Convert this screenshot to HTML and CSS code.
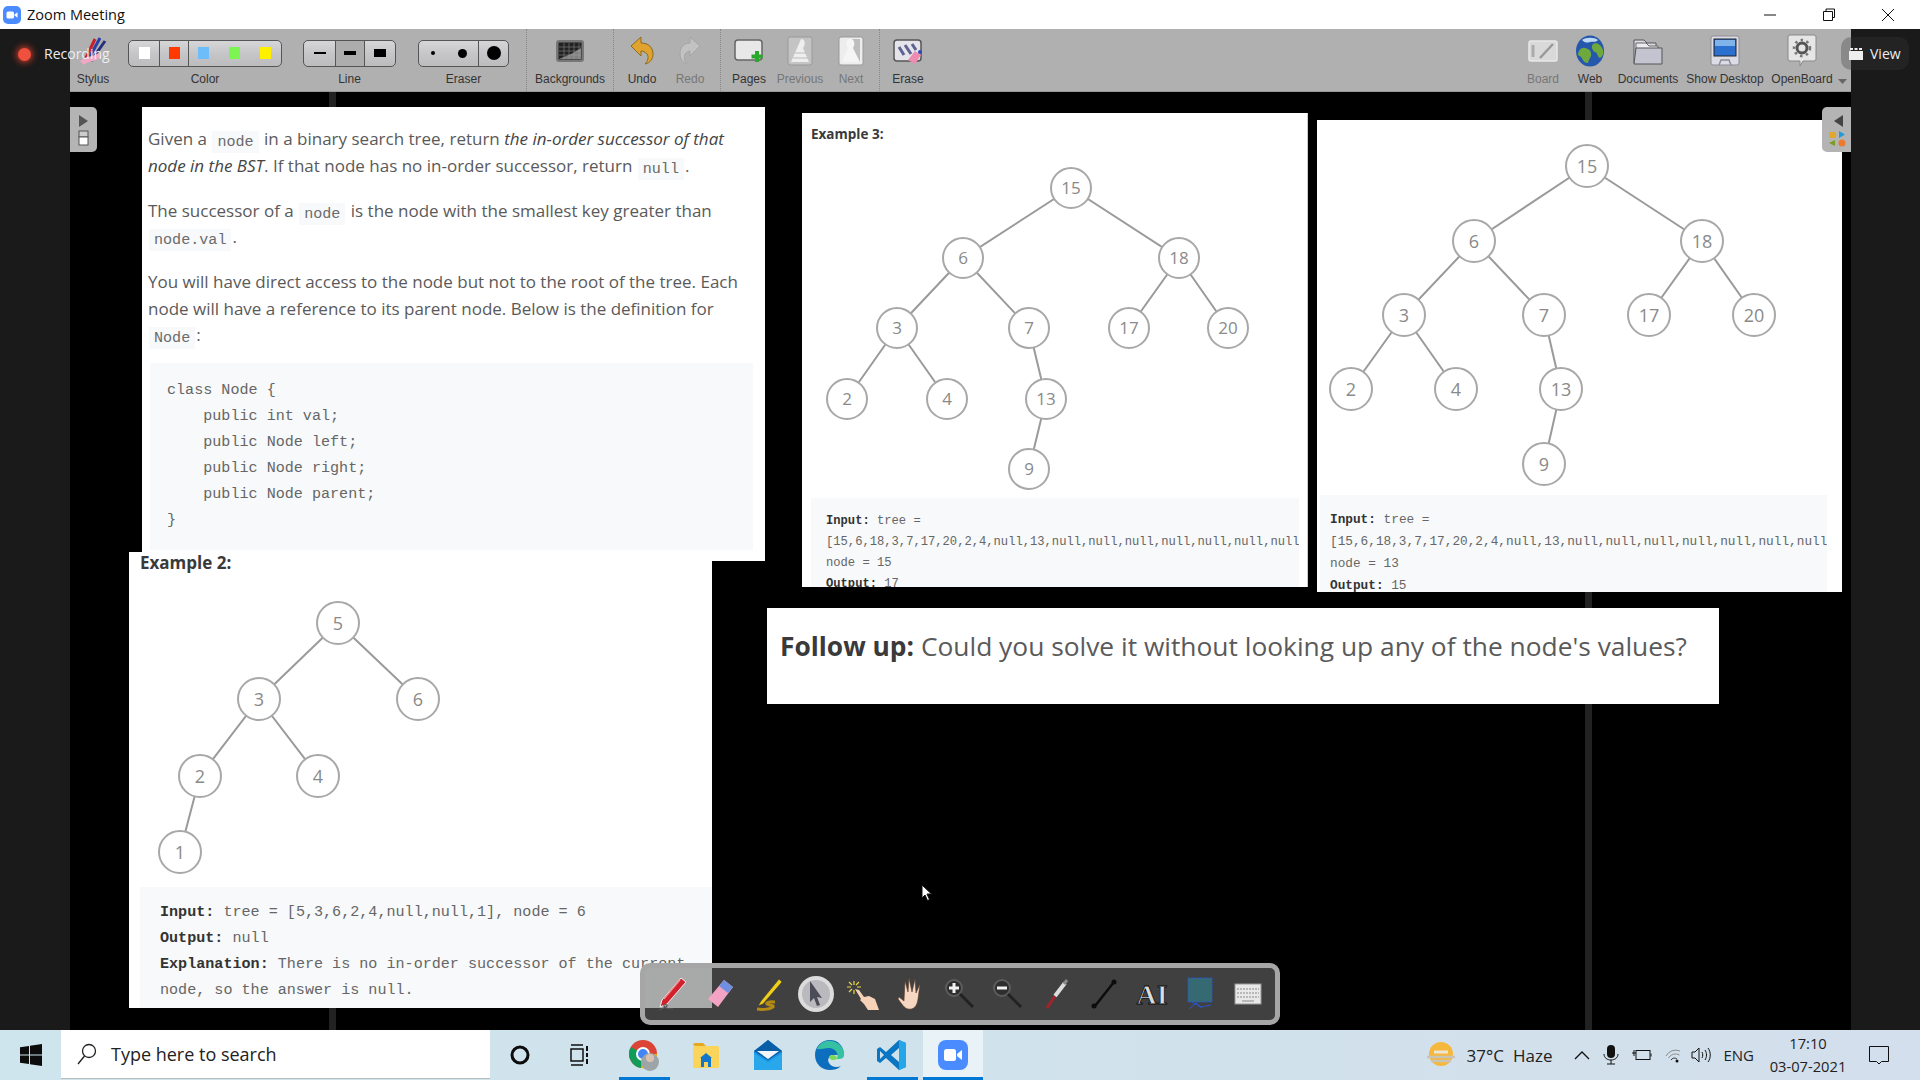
FILE: index.html
```html
<!DOCTYPE html>
<html>

<head>
    <title>Zoom Meeting</title>
    <link rel="stylesheet" href="styles.css">
</head>

<body>
    <div class="titlebar">
        <svg class="zoom-logo" width="18" height="18" viewBox="0 0 18 18">
            <rect width="18" height="18" rx="5" fill="#4a8cff" />
            <rect x="3.5" y="5.5" width="7.5" height="7" rx="1.5" fill="#fff" />
            <path d="M11.5 8.5l3-2.2v5.400l-3-2.200z" fill="#fff" />
        </svg>
        <span class="title-text">Zoom Meeting</span>
        <div class="win-controls">
            <svg width="14" height="14" viewBox="0 0 14 14"><path d="M1 7h12" stroke="#111" /></svg>
            <svg width="14" height="14" viewBox="0 0 14 14"><path d="M1.500 3.500h9v9h-9zM4 3.500v-2.500h8.500v8.500h-2" fill="none" stroke="#111" /></svg>
            <svg width="14" height="14" viewBox="0 0 14 14"><path d="M1 1l12 12M13 1l-12 12" stroke="#111" /></svg>
        </div>
    </div>

    <div class="meeting">
        <div class="side side-left">
            <div class="recording"><span class="rec-dot"></span>Recording</div>
        </div>

        <div class="center">
            <div class="toolbar">
                <div class="tool tool-stylus">
                    <div class="icon">
                        <svg width="30" height="30" viewBox="0 0 30 30">
                            <path d="M22 2L10 24" stroke="#2b3fa8" stroke-width="3" />
                            <path d="M17 3L7 24" stroke="#c8202a" stroke-width="3" />
                            <path d="M27 5L13 25" stroke="#26307e" stroke-width="3" />
                            <path d="M4 27c6-6 10-2 18-8" stroke="#f2a7c4" stroke-width="5" fill="none" />
                        </svg>
                    </div>
                    <span class="label">Stylus</span>
                </div>
                <div class="tool tool-color">
                    <div class="icon">
                        <div class="btn-group">
                            <div class="seg seg-c1"><i class="swatch sw-white"></i></div>
                            <div class="seg seg-c2"><i class="swatch sw-red"></i></div>
                            <div class="seg seg-c3">
                                <i class="swatch sw-blue"></i>
                                <i class="swatch sw-green"></i>
                                <i class="swatch sw-yellow"></i>
                            </div>
                        </div>
                    </div>
                    <span class="label">Color</span>
                </div>
                <div class="tool tool-line">
                    <div class="icon">
                        <div class="btn-group">
                            <div class="seg seg-l1"><i class="dash dash-1"></i></div>
                            <div class="seg seg-l2 seg-on"><i class="dash dash-2"></i></div>
                            <div class="seg seg-l3"><i class="dash dash-3"></i></div>
                        </div>
                    </div>
                    <span class="label">Line</span>
                </div>
                <div class="tool tool-eraser">
                    <div class="icon">
                        <div class="btn-group">
                            <div class="seg seg-e1"><i class="dot dot-1"></i></div>
                            <div class="seg seg-e2"><i class="dot dot-2"></i></div>
                            <div class="seg seg-e3"><i class="dot dot-3"></i></div>
                        </div>
                    </div>
                    <span class="label">Eraser</span>
                </div>
                <div class="sep sep-first"></div>
                <div class="tool tool-backgrounds">
                    <div class="icon">
                        <svg width="30" height="24" viewBox="0 0 30 24">
                            <rect x="1" y="1" width="28" height="22" rx="3" fill="#777" />
                            <rect x="3.500" y="3.500" width="23" height="17" fill="#222" />
                            <path d="M4 8h22M4 12h22M4 16h22M9 4v16M14 4v16M19 4v16M24 4v16" stroke="#777" stroke-width=".7" />
                            <path d="M4 20l12-5 10-6v11z" fill="#aaa" opacity=".7" />
                        </svg>
                    </div>
                    <span class="label">Backgrounds</span>
                </div>
                <div class="sep"></div>
                <div class="tool tool-undo">
                    <div class="icon">
                        <svg width="26" height="30" viewBox="0 0 26 30">
                            <path d="M2 10L12 1v6c8 0 12 5 12 11 0 5-3 9-8 10 3-3 4-7 2-10-2-2-4-3-6-3v5z" fill="#e0a32e" stroke="#8a6a22" />
                        </svg>
                    </div>
                    <span class="label">Undo</span>
                </div>
                <div class="tool tool-redo">
                    <div class="icon">
                        <svg width="24" height="30" viewBox="0 0 24 30">
                            <path d="M22 10L12 1v6C5 7 2 12 2 18c0 5 3 9 7 10-3-3-3-7-2-10 2-2 3-3 5-3v5z" fill="#c2c2c2" stroke="#a5a5a5" />
                        </svg>
                    </div>
                    <span class="label label-off">Redo</span>
                </div>
                <div class="sep sep-gap"></div>
                <div class="tool tool-pages">
                    <div class="icon">
                        <svg width="30" height="26" viewBox="0 0 30 26">
                            <rect x="1" y="2" width="27" height="20" rx="3" fill="#e8e8e8" stroke="#666" stroke-width="1.500" />
                            <path d="M23 13v11M17.500 18.500h11" stroke="#29a82c" stroke-width="4" />
                        </svg>
                    </div>
                    <span class="label">Pages</span>
                </div>
                <div class="tool tool-prev">
                    <div class="icon">
                        <svg width="26" height="30" viewBox="0 0 26 30">
                            <rect x="1" y="1" width="24" height="28" rx="2" fill="#c4c4c4" stroke="#999" />
                            <path d="M14 3c4 0 5 5 2 9l6 14H4z" fill="#eee" />
                            <path d="M8 17h12M6 22h15" stroke="#bbb" />
                        </svg>
                    </div>
                    <span class="label label-off">Previous</span>
                </div>
                <div class="tool tool-next">
                    <div class="icon">
                        <svg width="26" height="30" viewBox="0 0 26 30">
                            <rect x="1" y="1" width="24" height="28" rx="2" fill="#ededed" stroke="#999" />
                            <path d="M12 3c-4 0-5 5-2 9l-6 14h18V3z" fill="#f5f5f5" />
                            <path d="M14 3c4 3 2 7 1 9l7 14V3z" fill="#bdbdbd" />
                        </svg>
                    </div>
                    <span class="label label-off">Next</span>
                </div>
                <div class="sep"></div>
                <div class="tool tool-erase">
                    <div class="icon">
                        <svg width="30" height="28" viewBox="0 0 30 28">
                            <rect x="1" y="3" width="27" height="21" rx="3" fill="#e4e4ea" stroke="#555" stroke-width="1.500" />
                            <path d="M6 10l5 8M12 8l6 9M19 7l4 6" stroke="#5c6390" stroke-width="3" />
                            <path d="M15 23l7-9 6 4-6 9z" fill="#ee8bb0" />
                            <circle cx="27" cy="15" r="2" fill="#2d49b8" />
                        </svg>
                    </div>
                    <span class="label">Erase</span>
                </div>

                <div class="tool tool-board">
                    <div class="icon">
                        <svg width="30" height="26" viewBox="0 0 30 26">
                            <rect x="1" y="3" width="28" height="20" rx="2" fill="#d9d9d9" stroke="#e8e8e8" stroke-width="1.500" />
                            <path d="M5 7v12" stroke="#aaa" stroke-width="3" />
                            <path d="M12 20L25 6" stroke="#999" stroke-width="2.500" />
                        </svg>
                    </div>
                    <span class="label label-off">Board</span>
                </div>
                <div class="tool tool-web">
                    <div class="icon">
                        <svg width="30" height="32" viewBox="0 0 30 32">
                            <ellipse cx="15" cy="16" rx="14" ry="15.500" fill="#2557ad" />
                            <path d="M3 19c1-5 4-7 7-6s5 1 6 5-2 5-3 10c-5 0-5-4-7-6s-3-1-3-3zM18 9c4-2 8 1 10 6 1 4-1 7-3 8-3-1-2-5-5-6s-4-6-2-8z" fill="#6fa83c" />
                            <path d="M7 5c4-3 12-3 16 0-3 3-5 1-8 2s-5 1-8-2z" fill="#bcd8f2" />
                        </svg>
                    </div>
                    <span class="label">Web</span>
                </div>
                <div class="tool tool-docs">
                    <div class="icon">
                        <svg width="30" height="28" viewBox="0 0 30 28">
                            <path d="M1 26V3h10l3 3h9v5H4" fill="#dcdce2" stroke="#555" />
                            <path d="M3 26V6h10l3 3h9v5H6" fill="#ececf0" stroke="#666" />
                            <path d="M1 27l2-16h26v16z" fill="#c4c4d0" stroke="#555" />
                        </svg>
                    </div>
                    <span class="label">Documents</span>
                </div>
                <div class="tool tool-desktop">
                    <div class="icon">
                        <svg width="30" height="32" viewBox="0 0 30 32">
                            <rect x="1" y="1" width="28" height="29" rx="2" fill="#dcdce6" stroke="#8c8c96" />
                            <rect x="4" y="4" width="22" height="17" fill="#2b6fcf" stroke="#222" />
                            <path d="M5 5h20v6H5z" fill="#7fb3ea" />
                            <path d="M9 30l2-5h8l2 5" fill="none" stroke="#8c8c96" stroke-width="1.500" />
                        </svg>
                    </div>
                    <span class="label">Show Desktop</span>
                </div>
                <div class="tool tool-openboard">
                    <div class="icon">
                        <svg width="30" height="34" viewBox="0 0 30 34">
                            <path d="M3 1h24a2 2 0 012 2v22a2 2 0 01-2 2H16l-3 5v-5H3a2 2 0 01-2-2V3a2 2 0 012-2z" fill="#e6e6e6" stroke="#888" />
                            <circle cx="15" cy="14" r="5" fill="none" stroke="#555" stroke-width="3" />
                            <circle cx="15" cy="14" r="8" fill="none" stroke="#777" stroke-width="2.500" stroke-dasharray="2.500 3.500" />
                        </svg>
                    </div>
                    <span class="label">OpenBoard</span>
                </div>
                <div class="tool-arrow"></div>
            </div>

            <div class="canvas">
                <div class="strip strip-a"></div>
                <div class="strip strip-b"></div>

                <div class="card card-problem">
                    <p>Given a <code>node</code> in a binary search tree, return <em>the in-order successor of that<br>node in the BST</em>. If that node has no in-order successor, return <code>null</code>.</p>
                    <p>The successor of a <code>node</code> is the node with the smallest key greater than<br><code>node.val</code>.</p>
                    <p>You will have direct access to the node but not to the root of the tree. Each<br>node will have a reference to its parent node. Below is the definition for<br><code>Node</code>:</p>
                    <pre class="code-problem">class Node {
    public int val;
    public Node left;
    public Node right;
    public Node parent;
}</pre>
                </div>

                <div class="card card-ex2">
                    <div class="ex-title">Example 2:</div>
                    <svg class="tree" width="583" height="313" viewBox="129 574 583 313">
                        <path d="M338 623L259 699M338 623L418 699M259 699L200 776M259 699L318 776M200 776L180 852" />
                        <circle cx="338" cy="623" r="21" /><text x="338" y="630">5</text>
                        <circle cx="259" cy="699" r="21" /><text x="259" y="706">3</text>
                        <circle cx="418" cy="699" r="21" /><text x="418" y="706">6</text>
                        <circle cx="200" cy="776" r="21" /><text x="200" y="783">2</text>
                        <circle cx="318" cy="776" r="21" /><text x="318" y="783">4</text>
                        <circle cx="180" cy="852" r="21" /><text x="180" y="859">1</text>
                    </svg>
                    <pre class="code-ex2"><b>Input:</b> tree = [5,3,6,2,4,null,null,1], node = 6
<b>Output:</b> null
<b>Explanation:</b> There is no in-order successor of the current
node, so the answer is null.</pre>
                </div>

                <div class="card card-ex3">
                    <div class="ex-title-small">Example 3:</div>
                    <svg class="tree tree-small" width="506" height="354" viewBox="802 144 506 354">
                        <path d="M1071 188L963 258M1071 188L1179 258M963 258L897 328M963 258L1029 328M1179 258L1129 328M1179 258L1228 328M897 328L847 399M897 328L947 399M1029 328L1046 399M1046 399L1029 469" />
                        <circle cx="1071" cy="188" r="20" /><text x="1071" y="194">15</text>
                        <circle cx="963" cy="258" r="20" /><text x="963" y="264">6</text>
                        <circle cx="1179" cy="258" r="20" /><text x="1179" y="264">18</text>
                        <circle cx="897" cy="328" r="20" /><text x="897" y="334">3</text>
                        <circle cx="1029" cy="328" r="20" /><text x="1029" y="334">7</text>
                        <circle cx="1129" cy="328" r="20" /><text x="1129" y="334">17</text>
                        <circle cx="1228" cy="328" r="20" /><text x="1228" y="334">20</text>
                        <circle cx="847" cy="399" r="20" /><text x="847" y="405">2</text>
                        <circle cx="947" cy="399" r="20" /><text x="947" y="405">4</text>
                        <circle cx="1046" cy="399" r="20" /><text x="1046" y="405">13</text>
                        <circle cx="1029" cy="469" r="20" /><text x="1029" y="475">9</text>
                    </svg>
                    <pre class="code-ex3"><b>Input:</b> tree =
[15,6,18,3,7,17,20,2,4,null,13,null,null,null,null,null,null,null,9]
node = 15
<b>Output:</b> 17</pre>
                </div>

                <div class="card card-ex4">
                    <svg class="tree" width="525" height="375" viewBox="1317 120 525 375">
                        <path d="M1587 166L1474 241M1587 166L1702 241M1474 241L1404 315M1474 241L1544 315M1702 241L1649 315M1702 241L1754 315M1404 315L1351 389M1404 315L1456 389M1544 315L1561 389M1561 389L1544 464" />
                        <circle cx="1587" cy="166" r="21" /><text x="1587" y="173">15</text>
                        <circle cx="1474" cy="241" r="21" /><text x="1474" y="248">6</text>
                        <circle cx="1702" cy="241" r="21" /><text x="1702" y="248">18</text>
                        <circle cx="1404" cy="315" r="21" /><text x="1404" y="322">3</text>
                        <circle cx="1544" cy="315" r="21" /><text x="1544" y="322">7</text>
                        <circle cx="1649" cy="315" r="21" /><text x="1649" y="322">17</text>
                        <circle cx="1754" cy="315" r="21" /><text x="1754" y="322">20</text>
                        <circle cx="1351" cy="389" r="21" /><text x="1351" y="396">2</text>
                        <circle cx="1456" cy="389" r="21" /><text x="1456" y="396">4</text>
                        <circle cx="1561" cy="389" r="21" /><text x="1561" y="396">13</text>
                        <circle cx="1544" cy="464" r="21" /><text x="1544" y="471">9</text>
                    </svg>
                    <pre class="code-ex4"><b>Input:</b> tree =
[15,6,18,3,7,17,20,2,4,null,13,null,null,null,null,null,null,null,9]
node = 13
<b>Output:</b> 15</pre>
                </div>

                <div class="card card-follow"><b>Follow up:</b> Could you solve it without looking up any of the node's values?</div>

                <div class="handle handle-left">
                    <svg width="20" height="34" viewBox="0 0 20 34">
                        <path d="M5 2l9 6-9 6z" fill="#555" />
                        <rect x="5" y="18" width="9" height="6" fill="#ccc" stroke="#555" />
                        <rect x="5" y="24" width="9" height="8" fill="#fff" stroke="#555" />
                    </svg>
                </div>
                <div class="handle handle-right">
                    <svg width="24" height="34" viewBox="0 0 24 34">
                        <path d="M18 2l-9 6 9 6z" fill="#444" />
                        <rect x="4" y="19" width="7" height="6" fill="#e0a82e" />
                        <path d="M14 18l6 3.500-6 3.500z" fill="#1e9bd8" />
                        <path d="M10 27l-6 3 6 3z" fill="#7d9b2a" />
                        <circle cx="17" cy="30" r="3.500" fill="#ee7a2d" />
                    </svg>
                </div>

                <div class="float-bar">
                    <div class="float-item">
                        <svg width="32" height="36" viewBox="0 0 32 36">
                            <path d="M25 2L6 24l-2 7 7-3L30 6z" fill="#d3202c" stroke="#eee" />
                            <path d="M24 4L8 23" stroke="#f28a8a" stroke-width="1.200" />
                            <path d="M3 34c4-2 7-2 8-4s-4-2-3 0 5 3 9 3" fill="none" stroke="#555" stroke-width="1.200" />
                        </svg>
                    </div>
                    <div class="float-item">
                        <svg width="32" height="34" viewBox="0 0 32 34">
                            <path d="M4 22L20 3l9 7-15 20z" fill="#f3a3c4" />
                            <path d="M20 3l9 7-5 6-9-7z" fill="#6f8fe0" />
                        </svg>
                    </div>
                    <div class="float-item">
                        <svg width="32" height="36" viewBox="0 0 32 36">
                            <path d="M27 3L9 25l-3 5 5-2L30 6z" fill="#f0ce1c" stroke="#333" stroke-width=".6" />
                            <path d="M5 33c6 1 14 0 16-2s-8-2-6-4 6-1 8-1" fill="none" stroke="#b58a14" stroke-width="3" />
                        </svg>
                    </div>
                    <div class="float-item">
                        <svg width="38" height="38" viewBox="0 0 38 38">
                            <circle cx="19" cy="19" r="18" fill="#dcdcdc" />
                            <circle cx="19" cy="19" r="14" fill="#b9b9be" />
                            <path d="M13 6l12 17-5-1 3 8-3 1-3-8-4 4z" fill="#4c4c58" />
                        </svg>
                    </div>
                    <div class="float-item">
                        <svg width="38" height="38" viewBox="0 0 38 38">
                            <path d="M9 6v4M9 15v4M2 12h4M12 12h4M4 7l3 3M14 7l-3 3M4 17l3-3" stroke="#e8d84a" stroke-width="1.200" />
                            <path d="M10 14l4 1 5 7 5-1 6 3 4 11H23l-4-6-4-4 1-1z" fill="#f6d3b8" />
                        </svg>
                    </div>
                    <div class="float-item">
                        <svg width="30" height="36" viewBox="0 0 30 36">
                            <path d="M8 5l3 11 1-14 3 14 3-13 1 14 4-9-2 15c-1 7-4 11-10 10-4-1-6-5-10-10l1-2 5 4z" fill="#f6d8c2" stroke="#5a3a2a" stroke-width=".6" />
                        </svg>
                    </div>
                    <div class="float-item">
                        <svg width="32" height="34" viewBox="0 0 32 34">
                            <circle cx="10" cy="11" r="8" fill="#2e2e2e" stroke="#5c5c5c" stroke-width="2" />
                            <path d="M10 6v10M5 11h10" stroke="#f2f2f2" stroke-width="3" />
                            <path d="M16 17l13 13" stroke="#222" stroke-width="3" />
                        </svg>
                    </div>
                    <div class="float-item">
                        <svg width="32" height="34" viewBox="0 0 32 34">
                            <circle cx="10" cy="11" r="8" fill="#2e2e2e" stroke="#5c5c5c" stroke-width="2" />
                            <path d="M5 11h10" stroke="#f2f2f2" stroke-width="3" />
                            <path d="M16 17l13 13" stroke="#222" stroke-width="3" />
                        </svg>
                    </div>
                    <div class="float-item">
                        <svg width="32" height="36" viewBox="0 0 32 36">
                            <path d="M7 32l8-12" stroke="#a3232a" stroke-width="3" />
                            <path d="M15 20l10-13" stroke="#ddd" stroke-width="4" />
                            <path d="M24 8l3-4" stroke="#888" stroke-width="3" />
                        </svg>
                    </div>
                    <div class="float-item">
                        <svg width="32" height="36" viewBox="0 0 32 36">
                            <path d="M7 30L26 6" stroke="#0c0c0c" stroke-width="2.500" />
                            <circle cx="6" cy="30" r="2.500" fill="#0c0c0c" />
                            <circle cx="26" cy="6" r="2.500" fill="#0c0c0c" />
                        </svg>
                    </div>
                    <div class="float-item">
                        <svg width="32" height="36" viewBox="0 0 32 36">
                            <text class="ai-glyph" x="16" y="28">AI</text>
                        </svg>
                    </div>
                    <div class="float-item">
                        <svg width="28" height="36" viewBox="0 0 28 36">
                            <rect x="2" y="2" width="24" height="24" fill="#356a72" stroke="#2b55c9" stroke-dasharray="2 1" />
                            <path d="M3 33l7-6 5 4 10-2M6 26l10 6" fill="none" stroke="#2b55c9" />
                        </svg>
                    </div>
                    <div class="float-item">
                        <svg width="28" height="22" viewBox="0 0 28 22">
                            <rect x="1" y="1" width="26" height="20" fill="#e8e8e8" stroke="#999" />
                            <path d="M3 6h22M3 10h22M3 14h22" stroke="#888" stroke-dasharray="2 1" />
                            <path d="M8 18h12" stroke="#888" />
                        </svg>
                    </div>
                </div>

                <svg class="cursor" width="12" height="18" viewBox="0 0 12 18">
                    <path d="M1 1v13l3-3 2.500 5.500 2-1L6 10h4.500z" fill="#fff" stroke="#111" />
                </svg>
            </div>
        </div>

        <div class="side side-right">
            <div class="view-btn">
                <svg width="14" height="12" viewBox="0 0 14 12">
                    <rect y="3" width="14" height="9" fill="#eee" />
                    <path d="M1 0h3v2H1zM5.500 0h3v2h-3zM10 0h3v2h-3z" fill="#eee" />
                </svg>
                View
            </div>
        </div>
    </div>

    <div class="taskbar">
        <div class="start">
            <svg width="22" height="22" viewBox="0 0 22 22">
                <path d="M0 3.200l9-1.300v8.600H0zM10 1.800L22 0v10.500H10zM0 11.500h9v8.600l-9-1.300zM10 11.500h12V22l-12-1.800z" fill="#0c0c0c" />
            </svg>
        </div>
        <div class="search">
            <svg width="22" height="24" viewBox="0 0 22 24">
                <circle cx="13" cy="9" r="6.500" fill="none" stroke="#222" stroke-width="1.300" />
                <path d="M8.500 14L2 22" stroke="#222" stroke-width="1.300" />
            </svg>
            <span>Type here to search</span>
        </div>
        <div class="task-icon task-cortana">
            <svg width="22" height="22" viewBox="0 0 22 22"><circle cx="11" cy="11" r="8" fill="none" stroke="#0c0c0c" stroke-width="3" /></svg>
        </div>
        <div class="task-icon task-view">
            <svg width="20" height="22" viewBox="0 0 20 22">
                <path d="M2 1h12M2 21h12" stroke="#111" stroke-width="1.500" />
                <rect x="2" y="5" width="12" height="12" fill="none" stroke="#111" stroke-width="1.500" />
                <path d="M18 2v5M18 9v4M18 15v5" stroke="#111" stroke-width="2" />
            </svg>
        </div>
        <div class="task-icon task-active">
            <svg width="32" height="32" viewBox="0 0 32 32">
                <circle cx="15" cy="15" r="14" fill="#db4437" />
                <path d="M15 15L3 22A14 14 0 0013 29z" fill="#0f9d58" />
                <path d="M15 15L3 22A14 14 0 013 8z" fill="#0f9d58" />
                <path d="M15 15h14a14 14 0 01-16 14z" fill="#f4b400" />
                <circle cx="15" cy="15" r="6" fill="#4285f4" stroke="#fff" stroke-width="2" />
                <circle cx="22" cy="23" r="9" fill="#9ea5a8" />
                <circle cx="22" cy="19" r="4" fill="#d9c3b0" />
            </svg>
        </div>
        <div class="task-icon">
            <svg width="28" height="30" viewBox="0 0 28 30">
                <path d="M1 5a2 2 0 012-2h8l3 3H3z" fill="#e5a81f" />
                <rect x="1" y="6" width="26" height="22" rx="1.500" fill="#fbd45b" />
                <path d="M9 27v-9h10v9h-3v-5h-4v5z" fill="#1277c9" />
                <path d="M8 18l6-5 6 5z" fill="#1277c9" />
            </svg>
        </div>
        <div class="task-icon">
            <svg width="30" height="32" viewBox="0 0 30 32">
                <path d="M15 1l14 11v19H1V12z" fill="#1490df" />
                <path d="M15 1l14 11-14 9-14-9z" fill="#0a5ea8" />
                <path d="M4 12h22l-11 8z" fill="#f2f6fa" />
                <path d="M1 14l14 9 14-9v17H1z" fill="#28a8ea" />
            </svg>
        </div>
        <div class="task-icon">
            <svg width="32" height="32" viewBox="0 0 32 32">
                <path d="M16 1C7 1 1 8 1 16c0 9 7 15 15 15 4 0 8-1 11-4-4 2-10 1-12-3-2-3 0-7 3-8h12C30 7 24 1 16 1z" fill="#0d6ebd" />
                <path d="M3 10C6 3 14 0 21 3c6 2 10 8 9 14-1 3-4 3-7 3 2-6-2-11-8-11-5 0-9 2-12 1z" fill="#35c1a2" />
                <path d="M18 16c3 0 5 1 5 4-3 2-6 1-8-1 0-2 1-3 3-3z" fill="#7cd957" />
            </svg>
        </div>
        <div class="task-icon task-active">
            <svg width="30" height="32" viewBox="0 0 30 32">
                <path d="M22 1l7 3v24l-7 3L9 19l-6 5-3-2v-12l3-2 6 5z" fill="#0a75c2" />
                <path d="M22 1l7 3v24l-7 3z" fill="#25a6e8" />
                <path d="M22 9l-8 7 8 7z" fill="#cfe2ec" />
                <path d="M3 12l4 4-4 4z" fill="#cfe2ec" />
            </svg>
        </div>
        <div class="task-icon task-zoom">
            <svg width="30" height="30" viewBox="0 0 30 30">
                <rect width="30" height="30" rx="8" fill="#4a8cff" />
                <rect x="6" y="9" width="12" height="12" rx="2.500" fill="#fff" />
                <path d="M19 14l5-4v10l-5-4z" fill="#fff" />
            </svg>
        </div>

        <div class="tray">
            <div class="weather">
                <svg width="30" height="26" viewBox="0 0 30 26">
                    <circle cx="15" cy="12" r="12" fill="#f5b83d" />
                    <path d="M1 15h28M5 19h20" stroke="#c9c4b5" stroke-width="2.500" />
                    <path d="M8 10h14" stroke="#ece6d2" stroke-width="3" />
                </svg>
                <span class="temp">37°C</span>
                <span class="haze">Haze</span>
            </div>
            <svg class="tray-chevron" width="16" height="10" viewBox="0 0 16 10"><path d="M1 9l7-7 7 7" fill="none" stroke="#111" stroke-width="1.300" /></svg>
            <svg class="tray-mic" width="16" height="20" viewBox="0 0 16 20">
                <rect x="4" y="0" width="8" height="13" rx="4" fill="#111" />
                <path d="M1 9c0 8 14 8 14 0M8 15v4M4 19h8" fill="none" stroke="#111" />
            </svg>
            <svg class="tray-battery" width="20" height="12" viewBox="0 0 20 12">
                <rect x="4" y="1.500" width="14" height="9" fill="none" stroke="#111" />
                <path d="M19 4.500v3M0 4h4M2 1v6" stroke="#111" />
            </svg>
            <svg class="tray-wifi" width="16" height="16" viewBox="0 0 16 16">
                <path d="M1 9a11 11 0 0114-5M3.500 11a8 8 0 0111-3" fill="none" stroke="#8c8c8c" />
                <path d="M6 13a4 4 0 016-1" fill="none" stroke="#333" />
                <circle cx="12" cy="14" r="1.500" fill="#111" />
            </svg>
            <svg class="tray-sound" width="21" height="18" viewBox="0 0 21 18">
                <path d="M1 6h3l4-4v14l-4-4H1z" fill="none" stroke="#111" />
                <path d="M11 6c1 2 1 4 0 6M14 4c2 3 2 7 0 10M17 2c3 4 3 10 0 14" fill="none" stroke="#111" />
            </svg>
            <span class="lang">ENG</span>
            <div class="clock">
                <span>17:10</span>
                <span>03-07-2021</span>
            </div>
            <svg class="tray-notify" width="20" height="19" viewBox="0 0 20 19">
                <path d="M.5.500h19v15h-7l-2.500 2.500-2.500-2.500h-7z" fill="none" stroke="#111" />
            </svg>
        </div>
    </div>
</body>

</html>
```

FILE: styles.css
```css
* {
    margin: 0;
    padding: 0;
    box-sizing: border-box;
}

body {
    font-family: "Open Sans", "Liberation Sans", sans-serif;
    width: 1920px;
    height: 1080px;
    overflow: hidden;
    display: flex;
    flex-direction: column;
    background: #000;
}

svg {
    display: block;
    flex: none;
}

/* title bar */
.titlebar {
    height: 29px;
    background: #fff;
    display: flex;
    align-items: center;
    padding-left: 3px;
}

.title-text {
    margin-left: 6px;
    font-size: 14.500px;
    color: #111;
}

.win-controls {
    margin-left: auto;
    display: flex;
    gap: 45px;
    padding-right: 25px;
}

/* meeting area */
.meeting {
    flex: 1;
    display: flex;
    min-height: 0;
}

.side {
    background: #1a1a1a;
    position: relative;
}

.side-left {
    width: 70px;
}

.side-right {
    width: 69px;
}

.recording {
    position: absolute;
    left: 18px;
    top: 15px;
    z-index: 5;
    display: flex;
    align-items: center;
    gap: 13px;
    font-size: 14px;
    line-height: 20px;
    color: #eee;
    white-space: nowrap;
}

.rec-dot {
    width: 13px;
    height: 13px;
    border-radius: 50%;
    background: #f0503e;
    box-shadow: 0 0 7px 1px #e8402c;
}

.view-btn {
    position: absolute;
    left: -10px;
    top: 8px;
    width: 68px;
    height: 33px;
    border-radius: 10px;
    background: rgba(57, 57, 57, 0.32);
    display: flex;
    align-items: center;
    gap: 7px;
    padding-left: 8px;
    font-size: 14px;
    color: #eee;
}

.center {
    flex: 1;
    display: flex;
    flex-direction: column;
    min-width: 0;
}

/* whiteboard toolbar */
.toolbar {
    height: 63px;
    background: #b0b0b0;
    border-bottom: 1px solid #999;
    display: flex;
}

.tool {
    display: flex;
    flex-direction: column;
    align-items: center;
    padding-top: 5px;
}

.icon {
    height: 34px;
    display: flex;
    align-items: center;
    justify-content: center;
}

.label {
    font-family: "Liberation Sans", sans-serif;
    font-size: 12px;
    line-height: 22px;
    color: #333;
    white-space: nowrap;
}

.label-off {
    color: #777;
}

.sep {
    width: 1px;
    border-left: 1px dotted #888;
}

.sep-first {
    margin-left: 17px;
}

.sep-gap {
    margin-left: 10px;
}

.tool-stylus { width: 46px; }
.tool-color { width: 154px; margin-left: 12px; }
.tool-line { width: 93px; margin-left: 21px; }
.tool-eraser { width: 91px; margin-left: 22px; }
.tool-backgrounds { width: 86px; }
.tool-undo { width: 56px; }
.tool-redo { width: 40px; }
.tool-pages { width: 56px; }
.tool-prev { width: 46px; }
.tool-next { width: 56px; }
.tool-erase { width: 56px; }
.tool-board { width: 46px; margin-left: auto; }
.tool-web { width: 48px; }
.tool-docs { width: 68px; }
.tool-desktop { width: 86px; }
.tool-openboard { width: 68px; }

.tool-arrow {
    width: 15px;
    align-self: flex-end;
    margin-bottom: 7px;
    height: 5px;
    background: #666;
    clip-path: polygon(2px 0, 11px 0, 6.500px 100%);
}

.btn-group {
    display: flex;
    height: 27px;
    margin-top: 4px;
    border: 1px solid #555;
    border-radius: 5px;
    overflow: hidden;
    background: linear-gradient(#d6d6d8, #c6c6c8 50%, #bcbcbe);
}

.tool-color .btn-group,
.tool-line .btn-group,
.tool-eraser .btn-group {
    width: 100%;
}

.tool-color .icon,
.tool-line .icon,
.tool-eraser .icon {
    align-self: stretch;
}

.seg {
    display: flex;
    align-items: center;
    justify-content: center;
    border-right: 1px solid #555;
}

.seg:last-child {
    border-right: none;
}

.seg-on {
    background: #adadad;
}

.seg-c1 { width: 31px; }
.seg-c2 { width: 29px; }
.seg-c3 { flex: 1; justify-content: space-between; padding: 0 10px 0 9px; }
.seg-l1 { width: 32px; }
.seg-l2 { width: 29px; }
.seg-l3 { flex: 1; }
.seg-e1 { width: 28px; border-right: none; }
.seg-e2 { width: 32px; }
.seg-e3 { flex: 1; }

.swatch {
    width: 11px;
    height: 12px;
}

.sw-white { background: #fff; }
.sw-red { background: #ff3a00; }
.sw-blue { background: #6dbdfb; }
.sw-green { background: #7cf552; }
.sw-yellow { background: #fff000; }

.dash {
    background: #000;
    width: 12px;
}

.dash-1 { height: 2px; }
.dash-2 { height: 4px; }
.dash-3 { height: 8px; }

.dot {
    background: #000;
    border-radius: 50%;
}

.dot-1 { width: 4px; height: 4px; }
.dot-2 { width: 9px; height: 9px; }
.dot-3 { width: 14px; height: 14px; }

/* shared screenshots on the board */
.canvas {
    flex: 1;
    position: relative;
    background: #000;
}

.strip {
    position: absolute;
    top: 0;
    bottom: 0;
    width: 7px;
    background: #222;
}

.strip-a { left: 259px; }
.strip-b { left: 1515px; }

.card {
    position: absolute;
    background: #fff;
    overflow: hidden;
    color: #5a5a5a;
}

.card-problem {
    left: 72px;
    top: 15px;
    width: 623px;
    height: 454px;
    padding: 19px 0 0 6px;
    font-size: 17px;
    line-height: 26.500px;
}

.card-problem p {
    margin-bottom: 18.500px;
    white-space: nowrap;
}

.card-problem em {
    color: #444;
}

code,
pre {
    font-family: "Liberation Mono", monospace;
}

code {
    font-size: 15.100px;
    line-height: 0;
    vertical-align: -1px;
    background: #f7f9fa;
    color: #6b6b6b;
    padding: 2px 5px;
    margin: 0 1px;
}

pre {
    background: #f7f9fa;
    color: #666;
    white-space: pre;
    overflow: hidden;
}

pre b {
    color: #333;
}

.code-problem {
    width: 603px;
    height: 187px;
    margin: -4px 0 0 2px;
    padding: 14px 0 0 17px;
    font-size: 15.100px;
    line-height: 26px;
}

.card-ex2 {
    left: 59px;
    top: 460px;
    width: 583px;
    height: 456px;
}

.ex-title {
    padding-left: 11px;
    font-size: 17px;
    line-height: 22px;
    font-weight: 700;
    color: #3a3a3a;
}

.code-ex2 {
    margin-left: 11px;
    height: 121px;
    padding: 12px 0 0 20px;
    font-size: 15.100px;
    line-height: 26px;
}

.card-ex3 {
    left: 732px;
    top: 21px;
    width: 506px;
    height: 474px;
    padding-top: 12px;
    border-right: 1px solid #ccc;
}

.ex-title-small {
    padding-left: 9px;
    font-size: 13.500px;
    line-height: 19px;
    font-weight: 700;
    color: #3a3a3a;
}

.code-ex3 {
    margin-left: 9px;
    width: 488px;
    padding: 13px 0 0 15px;
    font-size: 12.150px;
    line-height: 21px;
}

.tree-small text {
    font-size: 17px;
}

.card-ex4 {
    left: 1247px;
    top: 28px;
    width: 525px;
    height: 472px;
}

.code-ex4 {
    margin-left: 3px;
    width: 507px;
    padding: 14px 0 0 10px;
    font-size: 12.750px;
    line-height: 22px;
}

.card-follow {
    left: 697px;
    top: 516px;
    width: 952px;
    height: 96px;
    padding: 18px 0 0 13px;
    font-size: 26.350px;
    line-height: 40px;
    white-space: nowrap;
}

.card-follow b {
    color: #3a3a3a;
}

.tree path {
    stroke: #9a9a9a;
    stroke-width: 2;
    fill: none;
}

.tree circle {
    fill: #fff;
    stroke: #a8a8a8;
    stroke-width: 2;
}

.tree text {
    font-family: "Open Sans", sans-serif;
    font-size: 18px;
    fill: #8a8a8a;
    text-anchor: middle;
}

.tree-small text {
    font-size: 17px;
}

.handle {
    position: absolute;
    top: 15px;
    width: 27px;
    height: 45px;
    background: #b4b4b4;
    display: flex;
    align-items: center;
    justify-content: center;
}

.handle-left {
    left: 0;
    border-radius: 0 5px 5px 0;
}

.handle-right {
    right: 0;
    width: 29px;
    border-radius: 5px 0 0 5px;
}

/* floating tool palette */
.float-bar {
    position: absolute;
    left: 570px;
    top: 871px;
    width: 640px;
    height: 62px;
    border: 5px solid #a6a6a6;
    border-radius: 10px;
    background: rgba(110, 110, 110, 0.58);
    display: flex;
    align-items: center;
    padding-left: 3px;
}

.float-item {
    width: 48px;
    display: flex;
    justify-content: center;
}

.ai-glyph {
    font-family: "Liberation Serif", serif;
    font-size: 28px;
    font-weight: 700;
    fill: #dcdcdc;
    stroke: #0c0c0c;
    stroke-width: 0.800px;
    text-anchor: middle;
}

.cursor {
    position: absolute;
    left: 851px;
    top: 792px;
}

/* windows taskbar */
.taskbar {
    height: 50px;
    background: linear-gradient(90deg, #cfe5ed, #d0e2ec 50%, #d3dfec);
    display: flex;
    align-items: center;
}

.start {
    width: 61px;
    display: flex;
    justify-content: center;
}

.search {
    width: 429px;
    height: 49px;
    align-self: flex-start;
    background: #fff;
    border-bottom: 1px solid #bbb;
    display: flex;
    align-items: center;
    gap: 13px;
    padding-left: 15px;
    font-size: 18px;
    color: #222;
}

.task-icon {
    width: 62px;
    align-self: stretch;
    display: flex;
    align-items: center;
    justify-content: center;
    flex: none;
}

.task-cortana {
    width: 60px;
}

.task-view {
    width: 58px;
    margin-right: 5px;
}

.task-active {
    background: linear-gradient(#0078d4, #0078d4) center bottom / 51px 3px no-repeat;
}

.task-zoom {
    width: 60px;
    background: #e9f2f6;
    box-shadow: inset 0 -3px 0 #0078d4;
}

.tray {
    margin-left: auto;
    display: flex;
    align-items: center;
    color: #222;
}

.weather {
    display: flex;
    align-items: center;
    font-size: 17px;
}

.temp {
    margin-left: 11px;
}

.haze {
    margin-left: 9px;
}

.tray-chevron { margin-left: 22px; }
.tray-mic { margin-left: 13px; }
.tray-battery { margin-left: 13px; }
.tray-wifi { margin-left: 13px; }
.tray-sound { margin-left: 10px; }

.lang {
    margin-left: 11px;
    font-size: 15px;
}

.clock {
    width: 84px;
    margin-left: 12px;
    display: flex;
    flex-direction: column;
    align-items: center;
    font-size: 14.700px;
    line-height: 23px;
}

.tray-notify {
    margin-left: 19px;
    margin-right: 31px;
}
```
